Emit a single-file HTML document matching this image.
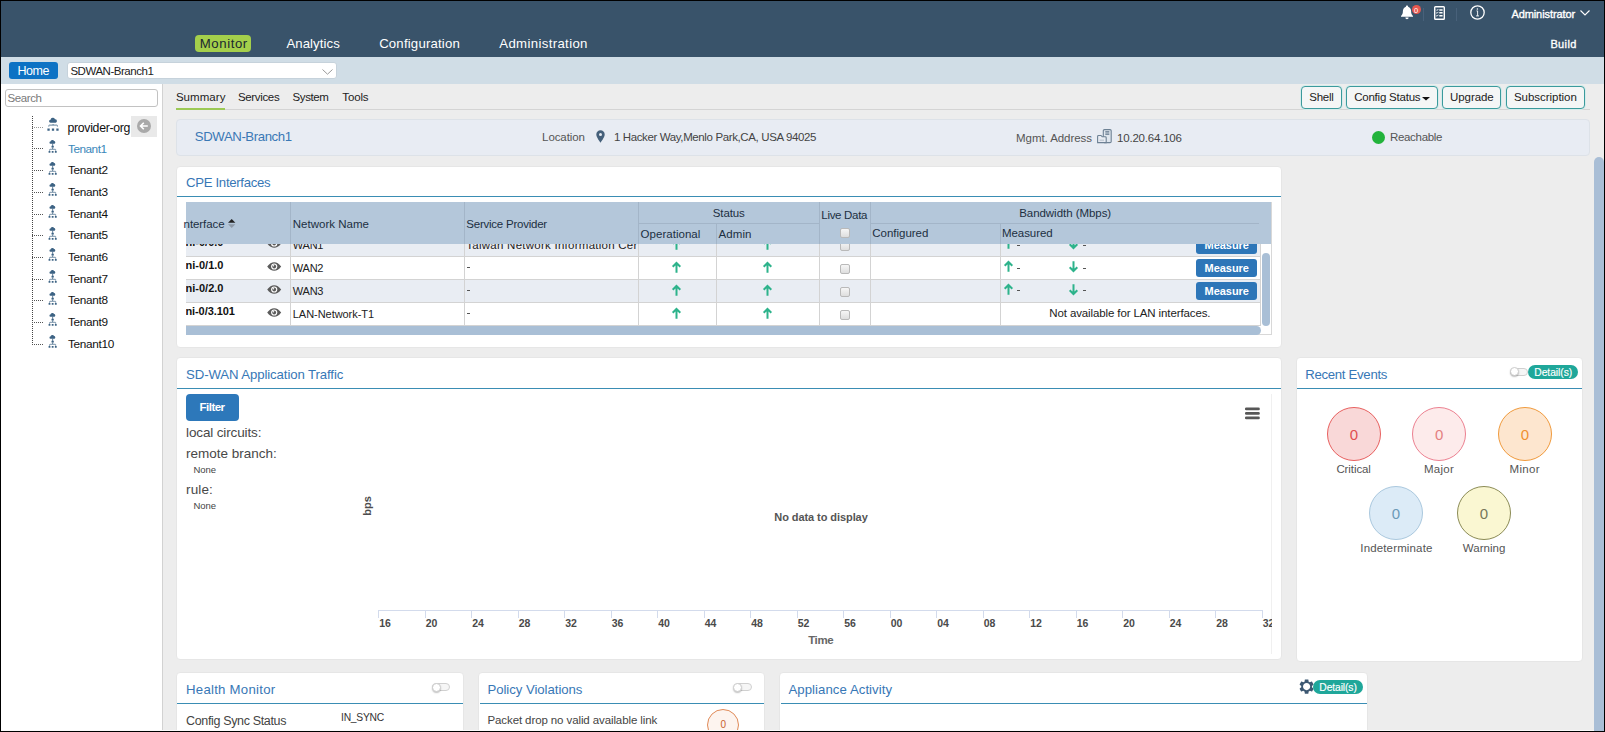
<!DOCTYPE html>
<html>
<head>
<meta charset="utf-8">
<title>SDWAN-Branch1</title>
<style>
*{box-sizing:border-box;margin:0;padding:0}
html,body{width:1605px;height:732px;overflow:hidden;background:#ededed;font-family:"Liberation Sans",sans-serif;font-size:12px;color:#222}
.a{position:absolute;white-space:nowrap}
.t{overflow:visible}
svg{position:absolute;overflow:visible}
.panel{background:#fff;border:1px solid #e6e6e6;border-radius:4px}
.pline{background:#3a8db4}
.btn{border:1px solid #3b9a9c;border-radius:4px;background:#f4f6f6;box-shadow:0 0 0 1px #d5ecec}
.circ{border-radius:50%;border-style:solid;border-width:1.5px}
.pill{background:#1fa79a;border-radius:8px}
.tog{border-radius:5px;background:#f6f6f6;border:1px solid #d0d0d0}
.knob{border-radius:50%;background:#fff;border:1px solid #cdcdcd;box-shadow:0 1px 1.5px rgba(0,0,0,.25)}

</style>
</head>
<body>
<div class="a" style="left:0px;top:0px;width:1605px;height:57px;background:#39536a"></div>
<div class="a" style="left:0px;top:57px;width:1605px;height:27px;background:#d0dde6"></div>
<div class="a" style="left:0px;top:84px;width:162px;height:648px;background:#fff"></div>
<div class="a" style="left:162px;top:84px;width:1px;height:648px;background:#d2d2d2"></div>
<div class="a" style="left:195px;top:35px;width:56px;height:17px;background:#a4cf4b;border-radius:4px"></div>
<div class="a t" style="left:199.74px;top:37.01px;font-size:13.2px;line-height:13.2px;color:#1a282f;letter-spacing:0.590px;">Monitor</div>
<div class="a t" style="left:286.44px;top:37.01px;font-size:13.2px;line-height:13.2px;color:#fff;letter-spacing:0.068px;">Analytics</div>
<div class="a t" style="left:379.14px;top:37.01px;font-size:13.2px;line-height:13.2px;color:#fff;letter-spacing:0.189px;">Configuration</div>
<div class="a t" style="left:499.24px;top:37.01px;font-size:13.2px;line-height:13.2px;color:#fff;letter-spacing:0.359px;">Administration</div>
<div class="a t" style="left:1511.41px;top:9.00px;font-size:11px;line-height:11px;color:#fff;letter-spacing:-0.086px;-webkit-text-stroke:0.35px #fff;">Administrator</div>
<div class="a t" style="left:1550.41px;top:39.01px;font-size:11px;line-height:11px;color:#fff;letter-spacing:0.375px;-webkit-text-stroke:0.35px #fff;">Build</div>
<svg style="left:1400px;top:4.5px" width="14" height="15" viewBox="0 0 14 15"><path d="M7 0.6c0.7 0 1.1 0.5 1.1 1.1 2 0.6 3 2.300 3 4.400 0 2.500 0.600 3.700 1.900 4.800v0.800h-12v-0.800c1.300-1.100 1.900-2.300 1.900-4.800 0-2.100 1-3.800 3-4.400 0-0.600 0.400-1.100 1.100-1.100z" fill="#fff"/><path d="M5.4 12.600h3.200c0 0.900-0.700 1.600-1.600 1.600s-1.600-0.700-1.600-1.600z" fill="#fff"/></svg>
<div class="a" style="left:1411.5px;top:5.4px;width:9px;height:9px;background:#e8584f;border-radius:50%"></div>
<div class="a t" style="left:1414.04px;top:7.00px;font-size:7.5px;line-height:7.5px;color:#fff;">0</div>
<div class="a" style="left:1423px;top:8px;width:1px;height:13px;background:#48617a"></div>
<svg style="left:1434px;top:5.500px" width="11" height="14" viewBox="0 0 11 14"><rect x="0.700" y="0.700" width="9.600" height="12.600" rx="0.800" fill="none" stroke="#fff" stroke-width="1.400"/><path d="M5.300 3.900h3.300M5.300 6.800h3.300M5.300 9.700h3.300" stroke="#fff" stroke-width="1.500"/><path d="M2.200 3.700l0.800 0.800 1.300-1.500M2.200 6.600l0.800 0.800 1.300-1.500M2.200 9.500l0.800 0.800 1.300-1.500" stroke="#fff" stroke-width="0.900" fill="none"/></svg>
<div class="a" style="left:1456px;top:8px;width:1px;height:13px;background:#48617a"></div>
<svg style="left:1470px;top:4.600px" width="15" height="15" viewBox="0 0 15 15"><circle cx="7.500" cy="7.500" r="6.700" fill="none" stroke="#fff" stroke-width="1.300"/><path d="M6.500 5.900h1.100v4.900M6.100 10.900h2.900" stroke="#fff" stroke-width="0.900" fill="none"/><circle cx="7.400" cy="3.900" r="0.750" fill="#fff"/></svg>
<svg style="left:1580px;top:9.500px" width="10" height="6" viewBox="0 0 10 6"><path d="M0.500 0.500l4.500 4.500 4.500-4.500" stroke="#fff" stroke-width="1.100" fill="none"/></svg>
<div class="a" style="left:9px;top:62px;width:49px;height:17px;background:#0d72c4;border-radius:3px"></div>
<div class="a t" style="left:17.56px;top:65.01px;font-size:12.5px;line-height:12.5px;color:#fff;letter-spacing:-0.490px;">Home</div>
<div class="a" style="left:67px;top:62px;width:270px;height:17px;background:#fff;border:1px solid #c6d2db;border-radius:3px"></div>
<div class="a t" style="left:70.40px;top:66.00px;font-size:11.5px;line-height:11.5px;color:#222;letter-spacing:-0.470px;">SDWAN-Branch1</div>
<svg style="left:321.500px;top:68.500px" width="11" height="6" viewBox="0 0 11 6"><path d="M0.500 0.500l5 4.700 5-4.700" stroke="#9a9a9a" stroke-width="1" fill="none"/></svg>
<div class="a" style="left:5px;top:89px;width:153px;height:18px;background:#fff;border:1px solid #c2c2c2;border-radius:3px"></div>
<div class="a t" style="left:7.60px;top:93.00px;font-size:11.5px;line-height:11.5px;color:#7a7a7a;letter-spacing:-0.427px;">Search</div>
<div class="a" style="left:32px;top:116px;width:1px;height:227.5px;background:repeating-linear-gradient(to bottom,#444 0,#444 1px,transparent 1px,transparent 2px)"></div>
<svg style="left:46.500px;top:118px" width="12" height="13" viewBox="0 0 12 13"><path d="M3.600 4.700a1.500 1.500 0 0 1-0.100-3 2.400 2.400 0 0 1 4.500-0.500 1.800 1.800 0 0 1 0.700 3.500z" fill="#3d6384"/><path d="M1.800 8.600v-0.900q0-0.600 0.600-0.600h7.400q0.600 0 0.600 0.600v0.900M6.100 7.100v-1" stroke="#3d6384" stroke-width="0.800" fill="none"/><path d="M0.400 10.500h2.300v2.200h-2.300zM4.850 10.500h2.300v2.200h-2.300zM9.300 10.500h2.300v2.200h-2.300z" fill="#3d6384"/></svg>
<div class="a" style="left:32px;top:127px;width:11px;height:1px;background:repeating-linear-gradient(to right,#999 0,#999 1px,transparent 1px,transparent 2px)"></div>
<div class="a t" style="left:67.47px;top:122.00px;font-size:12.3px;line-height:12.3px;color:#111;letter-spacing:-0.303px;">provider-org</div>
<div class="a" style="left:131px;top:116px;width:26px;height:21px;background:#e9e9e9"></div>
<svg style="left:137px;top:119px" width="14" height="14" viewBox="0 0 14 14"><circle cx="7" cy="7" r="7" fill="#a9a9a9"/><path d="M10.800 7h-7M6.800 3.700l-3.300 3.300 3.300 3.300" stroke="#fff" stroke-width="1.600" fill="none"/></svg>
<div class="a" style="left:32px;top:148px;width:11px;height:1px;background:repeating-linear-gradient(to right,#555 0,#555 1px,transparent 1px,transparent 2px)"></div>
<svg style="left:47.500px;top:140.0px" width="9.400" height="13" viewBox="0 0 9.400 13"><path d="M2.600 3.700a1.100 1.100 0 0 1-0.100-2.200 1.900 1.900 0 0 1 3.600-0.400 1.400 1.400 0 0 1 0.500 2.600z" fill="#3d6384"/><path d="M4.650 3.500v2.500M4.650 7.400v1.700" stroke="#3d6384" stroke-width="0.800"/><rect x="3.500" y="5.800" width="2.300" height="1.700" fill="#3d6384"/><path d="M1.600 10.800v-1q0-0.500 0.500-0.500h5.100q0.500 0 0.500 0.500v1" stroke="#3d6384" stroke-width="0.700" fill="none"/><path d="M0.600 11.100h1.800v1.700h-1.800zM3.750 11.100h1.800v1.700h-1.800zM6.900 11.100h1.800v1.700h-1.800z" fill="#3d6384"/></svg>
<div class="a t" style="left:67.99px;top:144.00px;font-size:11.8px;line-height:11.8px;color:#3a87ba;letter-spacing:-0.493px;">Tenant1</div>
<div class="a" style="left:32px;top:170px;width:11px;height:1px;background:repeating-linear-gradient(to right,#555 0,#555 1px,transparent 1px,transparent 2px)"></div>
<svg style="left:47.500px;top:161.7px" width="9.400" height="13" viewBox="0 0 9.400 13"><path d="M2.600 3.700a1.100 1.100 0 0 1-0.100-2.200 1.900 1.900 0 0 1 3.600-0.400 1.400 1.400 0 0 1 0.500 2.600z" fill="#3d6384"/><path d="M4.650 3.500v2.500M4.650 7.400v1.700" stroke="#3d6384" stroke-width="0.800"/><rect x="3.500" y="5.800" width="2.300" height="1.700" fill="#3d6384"/><path d="M1.600 10.800v-1q0-0.500 0.500-0.500h5.100q0.500 0 0.500 0.500v1" stroke="#3d6384" stroke-width="0.700" fill="none"/><path d="M0.600 11.100h1.800v1.700h-1.800zM3.750 11.100h1.800v1.700h-1.800zM6.900 11.100h1.800v1.700h-1.800z" fill="#3d6384"/></svg>
<div class="a t" style="left:67.99px;top:165.02px;font-size:11.8px;line-height:11.8px;color:#111;letter-spacing:-0.310px;">Tenant2</div>
<div class="a" style="left:32px;top:192px;width:11px;height:1px;background:repeating-linear-gradient(to right,#555 0,#555 1px,transparent 1px,transparent 2px)"></div>
<svg style="left:47.500px;top:183.3px" width="9.400" height="13" viewBox="0 0 9.400 13"><path d="M2.600 3.700a1.100 1.100 0 0 1-0.100-2.200 1.900 1.900 0 0 1 3.600-0.400 1.400 1.400 0 0 1 0.500 2.600z" fill="#3d6384"/><path d="M4.650 3.500v2.500M4.650 7.400v1.700" stroke="#3d6384" stroke-width="0.800"/><rect x="3.500" y="5.800" width="2.300" height="1.700" fill="#3d6384"/><path d="M1.600 10.800v-1q0-0.500 0.500-0.500h5.100q0.500 0 0.500 0.500v1" stroke="#3d6384" stroke-width="0.700" fill="none"/><path d="M0.600 11.100h1.800v1.700h-1.800zM3.750 11.100h1.800v1.700h-1.800zM6.900 11.100h1.800v1.700h-1.800z" fill="#3d6384"/></svg>
<div class="a t" style="left:67.99px;top:187.01px;font-size:11.8px;line-height:11.8px;color:#111;letter-spacing:-0.310px;">Tenant3</div>
<div class="a" style="left:32px;top:214px;width:11px;height:1px;background:repeating-linear-gradient(to right,#555 0,#555 1px,transparent 1px,transparent 2px)"></div>
<svg style="left:47.500px;top:205.0px" width="9.400" height="13" viewBox="0 0 9.400 13"><path d="M2.600 3.700a1.100 1.100 0 0 1-0.100-2.200 1.900 1.900 0 0 1 3.600-0.400 1.400 1.400 0 0 1 0.500 2.600z" fill="#3d6384"/><path d="M4.650 3.500v2.500M4.650 7.400v1.700" stroke="#3d6384" stroke-width="0.800"/><rect x="3.500" y="5.800" width="2.300" height="1.700" fill="#3d6384"/><path d="M1.600 10.800v-1q0-0.500 0.500-0.500h5.100q0.500 0 0.500 0.500v1" stroke="#3d6384" stroke-width="0.700" fill="none"/><path d="M0.600 11.100h1.800v1.700h-1.800zM3.750 11.100h1.800v1.700h-1.800zM6.900 11.100h1.800v1.700h-1.800z" fill="#3d6384"/></svg>
<div class="a t" style="left:67.99px;top:209.01px;font-size:11.8px;line-height:11.8px;color:#111;letter-spacing:-0.310px;">Tenant4</div>
<div class="a" style="left:32px;top:235px;width:11px;height:1px;background:repeating-linear-gradient(to right,#555 0,#555 1px,transparent 1px,transparent 2px)"></div>
<svg style="left:47.500px;top:226.7px" width="9.400" height="13" viewBox="0 0 9.400 13"><path d="M2.600 3.700a1.100 1.100 0 0 1-0.100-2.200 1.900 1.900 0 0 1 3.600-0.400 1.400 1.400 0 0 1 0.500 2.600z" fill="#3d6384"/><path d="M4.650 3.500v2.500M4.650 7.400v1.700" stroke="#3d6384" stroke-width="0.800"/><rect x="3.500" y="5.800" width="2.300" height="1.700" fill="#3d6384"/><path d="M1.600 10.800v-1q0-0.500 0.500-0.500h5.100q0.500 0 0.500 0.500v1" stroke="#3d6384" stroke-width="0.700" fill="none"/><path d="M0.600 11.100h1.800v1.700h-1.800zM3.750 11.100h1.800v1.700h-1.800zM6.900 11.100h1.800v1.700h-1.800z" fill="#3d6384"/></svg>
<div class="a t" style="left:67.99px;top:230.01px;font-size:11.8px;line-height:11.8px;color:#111;letter-spacing:-0.310px;">Tenant5</div>
<div class="a" style="left:32px;top:257px;width:11px;height:1px;background:repeating-linear-gradient(to right,#555 0,#555 1px,transparent 1px,transparent 2px)"></div>
<svg style="left:47.500px;top:248.3px" width="9.400" height="13" viewBox="0 0 9.400 13"><path d="M2.600 3.700a1.100 1.100 0 0 1-0.100-2.200 1.900 1.900 0 0 1 3.600-0.400 1.400 1.400 0 0 1 0.500 2.600z" fill="#3d6384"/><path d="M4.650 3.500v2.500M4.650 7.400v1.700" stroke="#3d6384" stroke-width="0.800"/><rect x="3.500" y="5.800" width="2.300" height="1.700" fill="#3d6384"/><path d="M1.600 10.800v-1q0-0.500 0.500-0.500h5.100q0.500 0 0.500 0.500v1" stroke="#3d6384" stroke-width="0.700" fill="none"/><path d="M0.600 11.100h1.800v1.700h-1.800zM3.750 11.100h1.800v1.700h-1.800zM6.900 11.100h1.800v1.700h-1.800z" fill="#3d6384"/></svg>
<div class="a t" style="left:67.99px;top:252.01px;font-size:11.8px;line-height:11.8px;color:#111;letter-spacing:-0.310px;">Tenant6</div>
<div class="a" style="left:32px;top:279px;width:11px;height:1px;background:repeating-linear-gradient(to right,#555 0,#555 1px,transparent 1px,transparent 2px)"></div>
<svg style="left:47.500px;top:270.0px" width="9.400" height="13" viewBox="0 0 9.400 13"><path d="M2.600 3.700a1.100 1.100 0 0 1-0.100-2.200 1.900 1.900 0 0 1 3.600-0.400 1.400 1.400 0 0 1 0.500 2.600z" fill="#3d6384"/><path d="M4.650 3.500v2.500M4.650 7.400v1.700" stroke="#3d6384" stroke-width="0.800"/><rect x="3.500" y="5.800" width="2.300" height="1.700" fill="#3d6384"/><path d="M1.600 10.800v-1q0-0.500 0.500-0.500h5.100q0.500 0 0.500 0.500v1" stroke="#3d6384" stroke-width="0.700" fill="none"/><path d="M0.600 11.100h1.800v1.700h-1.800zM3.750 11.100h1.800v1.700h-1.800zM6.900 11.100h1.800v1.700h-1.800z" fill="#3d6384"/></svg>
<div class="a t" style="left:67.99px;top:274.01px;font-size:11.8px;line-height:11.8px;color:#111;letter-spacing:-0.310px;">Tenant7</div>
<div class="a" style="left:32px;top:300px;width:11px;height:1px;background:repeating-linear-gradient(to right,#555 0,#555 1px,transparent 1px,transparent 2px)"></div>
<svg style="left:47.500px;top:291.7px" width="9.400" height="13" viewBox="0 0 9.400 13"><path d="M2.600 3.700a1.100 1.100 0 0 1-0.100-2.200 1.900 1.900 0 0 1 3.600-0.400 1.400 1.400 0 0 1 0.500 2.600z" fill="#3d6384"/><path d="M4.650 3.500v2.500M4.650 7.400v1.700" stroke="#3d6384" stroke-width="0.800"/><rect x="3.500" y="5.800" width="2.300" height="1.700" fill="#3d6384"/><path d="M1.600 10.800v-1q0-0.500 0.500-0.500h5.100q0.500 0 0.500 0.500v1" stroke="#3d6384" stroke-width="0.700" fill="none"/><path d="M0.600 11.100h1.800v1.700h-1.800zM3.750 11.100h1.800v1.700h-1.800zM6.900 11.100h1.800v1.700h-1.800z" fill="#3d6384"/></svg>
<div class="a t" style="left:67.99px;top:295.00px;font-size:11.8px;line-height:11.8px;color:#111;letter-spacing:-0.310px;">Tenant8</div>
<div class="a" style="left:32px;top:322px;width:11px;height:1px;background:repeating-linear-gradient(to right,#555 0,#555 1px,transparent 1px,transparent 2px)"></div>
<svg style="left:47.500px;top:313.4px" width="9.400" height="13" viewBox="0 0 9.400 13"><path d="M2.600 3.700a1.100 1.100 0 0 1-0.100-2.200 1.900 1.900 0 0 1 3.600-0.400 1.400 1.400 0 0 1 0.500 2.600z" fill="#3d6384"/><path d="M4.650 3.500v2.500M4.650 7.400v1.700" stroke="#3d6384" stroke-width="0.800"/><rect x="3.500" y="5.800" width="2.300" height="1.700" fill="#3d6384"/><path d="M1.600 10.800v-1q0-0.500 0.500-0.500h5.100q0.500 0 0.500 0.500v1" stroke="#3d6384" stroke-width="0.700" fill="none"/><path d="M0.600 11.100h1.800v1.700h-1.800zM3.750 11.100h1.800v1.700h-1.800zM6.900 11.100h1.800v1.700h-1.800z" fill="#3d6384"/></svg>
<div class="a t" style="left:67.99px;top:317.00px;font-size:11.8px;line-height:11.8px;color:#111;letter-spacing:-0.310px;">Tenant9</div>
<div class="a" style="left:32px;top:344px;width:11px;height:1px;background:repeating-linear-gradient(to right,#555 0,#555 1px,transparent 1px,transparent 2px)"></div>
<svg style="left:47.500px;top:335.0px" width="9.400" height="13" viewBox="0 0 9.400 13"><path d="M2.600 3.700a1.100 1.100 0 0 1-0.100-2.200 1.900 1.900 0 0 1 3.600-0.400 1.400 1.400 0 0 1 0.500 2.600z" fill="#3d6384"/><path d="M4.650 3.500v2.500M4.650 7.400v1.700" stroke="#3d6384" stroke-width="0.800"/><rect x="3.500" y="5.800" width="2.300" height="1.700" fill="#3d6384"/><path d="M1.600 10.800v-1q0-0.500 0.500-0.500h5.100q0.500 0 0.500 0.500v1" stroke="#3d6384" stroke-width="0.700" fill="none"/><path d="M0.600 11.100h1.800v1.700h-1.800zM3.750 11.100h1.800v1.700h-1.800zM6.900 11.100h1.800v1.700h-1.800z" fill="#3d6384"/></svg>
<div class="a t" style="left:67.99px;top:339.02px;font-size:11.8px;line-height:11.8px;color:#111;letter-spacing:-0.303px;">Tenant10</div>
<div class="a t" style="left:175.90px;top:92.00px;font-size:11.5px;line-height:11.5px;color:#222;letter-spacing:0.050px;">Summary</div>
<div class="a t" style="left:237.90px;top:92.00px;font-size:11.5px;line-height:11.5px;color:#222;letter-spacing:-0.329px;">Services</div>
<div class="a t" style="left:292.50px;top:92.00px;font-size:11.5px;line-height:11.5px;color:#222;letter-spacing:-0.388px;">System</div>
<div class="a t" style="left:342.30px;top:92.00px;font-size:11.5px;line-height:11.5px;color:#222;letter-spacing:-0.139px;">Tools</div>
<div class="a" style="left:176px;top:109px;width:1414px;height:1px;background:#d4d4d4"></div>
<div class="a" style="left:176px;top:108px;width:49px;height:2px;background:#9cc955"></div>
<div class="a btn" style="left:1301px;top:86px;width:41px;height:23px"></div>
<div class="a t" style="left:1309.30px;top:92.00px;font-size:11.5px;line-height:11.5px;color:#222;letter-spacing:-0.268px;">Shell</div>
<div class="a btn" style="left:1346px;top:86px;width:92px;height:23px"></div>
<div class="a t" style="left:1354.20px;top:92.00px;font-size:11.5px;line-height:11.5px;color:#222;letter-spacing:-0.220px;">Config Status</div>
<div class="a btn" style="left:1442px;top:86px;width:59px;height:23px"></div>
<div class="a t" style="left:1450.10px;top:92.00px;font-size:11.5px;line-height:11.5px;color:#222;letter-spacing:-0.087px;">Upgrade</div>
<div class="a btn" style="left:1506px;top:86px;width:79px;height:23px"></div>
<div class="a t" style="left:1513.90px;top:92.00px;font-size:11.5px;line-height:11.5px;color:#222;letter-spacing:-0.027px;">Subscription</div>
<svg style="left:1422.200px;top:96.900px" width="8" height="3.500" viewBox="0 0 8 3.500"><path d="M0 0h8l-4 3.500z" fill="#111"/></svg>
<div class="a" style="left:176px;top:119px;width:1414px;height:37px;background:#e8ecf3;border:1px solid #dde2e8;border-radius:4px"></div>
<div class="a t" style="left:194.84px;top:130.01px;font-size:13.2px;line-height:13.2px;color:#3a78b5;letter-spacing:-0.407px;">SDWAN-Branch1</div>
<div class="a t" style="left:542.10px;top:132.00px;font-size:11.5px;line-height:11.5px;color:#555;letter-spacing:-0.097px;">Location</div>
<svg style="left:595.500px;top:129.500px" width="9" height="13" viewBox="0 0 9 13"><path d="M4.500 0.300a4.200 4.200 0 0 1 4.200 4.200c0 2.900-4.200 8.200-4.200 8.200s-4.200-5.300-4.200-8.200a4.200 4.200 0 0 1 4.200-4.200z" fill="#45607a"/><circle cx="4.500" cy="4.400" r="1.500" fill="#e8ecf3"/></svg>
<div class="a t" style="left:613.90px;top:132.00px;font-size:11.5px;line-height:11.5px;color:#444;letter-spacing:-0.376px;">1 Hacker Way,Menlo Park,CA, USA 94025</div>
<div class="a t" style="left:1016.10px;top:133.00px;font-size:11.5px;line-height:11.5px;color:#555;letter-spacing:-0.075px;">Mgmt. Address</div>
<svg style="left:1097px;top:129px" width="15" height="14.500" viewBox="0 0 15 14.500"><rect x="6.300" y="0.600" width="7.900" height="13" rx="1.200" fill="#dfe6ee" stroke="#6d8194" stroke-width="1.100"/><path d="M8.300 2.900h4M8.300 5.100h4" stroke="#5c7186" stroke-width="1.200"/><path d="M0.600 13.600v-6.200q0-0.900 0.900-0.900h2.500l1.200 1.300h3.100q0.900 0 0.900 0.900v4.900z" fill="#e8ecf3" stroke="#6d8194" stroke-width="1.100"/><path d="M2.600 11.300h4.400" stroke="#c5ced8" stroke-width="1.600"/></svg>
<div class="a t" style="left:1117.10px;top:133.00px;font-size:11.5px;line-height:11.5px;color:#444;letter-spacing:-0.214px;">10.20.64.106</div>
<div class="a" style="left:1372px;top:131.2px;width:13px;height:13px;background:#22b33b;border-radius:50%"></div>
<div class="a t" style="left:1389.90px;top:132.01px;font-size:11.5px;line-height:11.5px;color:#555;letter-spacing:-0.297px;">Reachable</div>
<div class="a panel" style="left:176px;top:166px;width:1106px;height:182px"></div>
<div class="a t" style="left:186.04px;top:176.00px;font-size:13.2px;line-height:13.2px;color:#3777b6;letter-spacing:-0.320px;">CPE Interfaces</div>
<div class="a" style="left:177px;top:196px;width:1104px;height:1px;background:#3a8db4"></div>
<div class="a" style="left:186px;top:202px;width:1086px;height:133px;border:1px solid #d8d8d8;background:#fff"></div>
<div class="a" style="left:186px;top:243.6px;width:1074px;height:13.400000000000006px;background:#e9edf3;border-bottom:1px solid #d3d3d3"></div>
<div class="a" style="left:186px;top:257px;width:1074px;height:23px;background:#fff;border-bottom:1px solid #d3d3d3"></div>
<div class="a" style="left:186px;top:280px;width:1074px;height:23px;background:#e9edf3;border-bottom:1px solid #d3d3d3"></div>
<div class="a" style="left:186px;top:303px;width:1074px;height:23px;background:#fff;border-bottom:1px solid #d3d3d3"></div>
<div class="a" style="left:290px;top:243px;width:1px;height:83px;background:#d3d3d3"></div>
<div class="a" style="left:464px;top:243px;width:1px;height:83px;background:#d3d3d3"></div>
<div class="a" style="left:638px;top:243px;width:1px;height:83px;background:#d3d3d3"></div>
<div class="a" style="left:716px;top:243px;width:1px;height:83px;background:#d3d3d3"></div>
<div class="a" style="left:819px;top:243px;width:1px;height:83px;background:#d3d3d3"></div>
<div class="a" style="left:869.5px;top:243px;width:1px;height:83px;background:#d3d3d3"></div>
<div class="a" style="left:999.5px;top:243px;width:1px;height:83px;background:#d3d3d3"></div>
<div class="a" style="left:1259.5px;top:243px;width:1px;height:83px;background:#d3d3d3"></div>
<div class="a" style="left:186px;top:202px;width:1084.5px;height:41.6px;background:#b4c7da"></div>
<div class="a" style="left:290px;top:202px;width:1px;height:41.6px;background:#a3b5c8"></div>
<div class="a" style="left:464px;top:202px;width:1px;height:41.6px;background:#a3b5c8"></div>
<div class="a" style="left:638px;top:202px;width:1px;height:41.6px;background:#a3b5c8"></div>
<div class="a" style="left:819px;top:202px;width:1px;height:41.6px;background:#a3b5c8"></div>
<div class="a" style="left:869.5px;top:202px;width:1px;height:41.6px;background:#a3b5c8"></div>
<div class="a" style="left:716px;top:223.5px;width:1px;height:20px;background:#a3b5c8"></div>
<div class="a" style="left:999.5px;top:223.5px;width:1px;height:20px;background:#a3b5c8"></div>
<div class="a" style="left:638.5px;top:223px;width:180.5px;height:1px;background:#a3b5c8"></div>
<div class="a" style="left:870px;top:223px;width:389px;height:1px;background:#a3b5c8"></div>
<div class="a t" style="left:183.60px;top:219.00px;font-size:11.5px;line-height:11.5px;color:#1c2f42;letter-spacing:-0.080px;">nterface</div>
<svg style="left:228.200px;top:219px" width="7.400" height="9" viewBox="0 0 7.400 9"><path d="M0 3.800l3.700-3.800 3.700 3.800z" fill="#222"/><path d="M0 5.200l3.700 3.800 3.700-3.800z" fill="#8e9aa8"/></svg>
<div class="a t" style="left:292.80px;top:219.00px;font-size:11.5px;line-height:11.5px;color:#1c2f42;letter-spacing:0.013px;">Network Name</div>
<div class="a t" style="left:466.30px;top:219.00px;font-size:11.5px;line-height:11.5px;color:#1c2f42;letter-spacing:-0.231px;">Service Provider</div>
<div class="a t" style="left:712.80px;top:208.01px;font-size:11.5px;line-height:11.5px;color:#1c2f42;letter-spacing:-0.141px;">Status</div>
<div class="a t" style="left:640.60px;top:229.00px;font-size:11.5px;line-height:11.5px;color:#1c2f42;letter-spacing:0.024px;">Operational</div>
<div class="a t" style="left:718.50px;top:229.00px;font-size:11.5px;line-height:11.5px;color:#1c2f42;letter-spacing:0.099px;">Admin</div>
<div class="a t" style="left:821.30px;top:210.00px;font-size:11.5px;line-height:11.5px;color:#1c2f42;letter-spacing:-0.299px;">Live Data</div>
<div class="a t" style="left:872.30px;top:228.00px;font-size:11.5px;line-height:11.5px;color:#1c2f42;letter-spacing:-0.018px;">Configured</div>
<div class="a t" style="left:1002.00px;top:228.00px;font-size:11.5px;line-height:11.5px;color:#1c2f42;letter-spacing:-0.077px;">Measured</div>
<div class="a t" style="left:1019.20px;top:208.00px;font-size:11.5px;line-height:11.5px;color:#1c2f42;letter-spacing:-0.046px;">Bandwidth (Mbps)</div>
<div class="a" style="left:839.5px;top:227.5px;width:10px;height:10px;border:1px solid #b9b9b9;border-radius:2px;background:linear-gradient(#f6f6f6,#dedede)"></div>
<div class="a" style="left:186px;top:243.600px;width:1074px;height:82.400px;overflow:hidden">
<div class="a t" style="left:-6.68px;top:-6.60px;font-size:11px;line-height:11px;color:#111;font-weight:bold;letter-spacing:0.017px;">vni-0/0.0</div>
<svg style="left:80.800px;top:-4.6px" width="14.400" height="9" viewBox="0 0 14.400 9"><path d="M0.200 4.500q3.200-4.300 7-4.300t7 4.300q-3.200 4.300-7 4.300t-7-4.300z" fill="#5b5b5b"/><circle cx="7.200" cy="4.500" r="3.100" fill="#fff"/><circle cx="7.200" cy="4.500" r="1.900" fill="#5b5b5b"/><circle cx="6.500" cy="3.800" r="0.700" fill="#fff"/></svg>
<div class="a t" style="left:106.81px;top:-3.60px;font-size:11px;line-height:11px;color:#222;letter-spacing:-0.235px;">WAN1</div>
<div class="a t" style="left:280.30px;top:-3.60px;font-size:11.5px;line-height:11.5px;color:#222;letter-spacing:0.256px;width:171px;overflow:hidden;">Taiwan Network Information Center</div>
<svg style="left:486.4px;top:-4.4px" width="9" height="11" viewBox="0 0 9 11"><path d="M4.500 10.800v-9.500M0.700 4.800l3.800-3.800 3.800 3.800" stroke="#2db38b" stroke-width="2" fill="none"/></svg>
<svg style="left:577px;top:-4.4px" width="9" height="11" viewBox="0 0 9 11"><path d="M4.500 10.800v-9.500M0.700 4.800l3.800-3.800 3.800 3.800" stroke="#2db38b" stroke-width="2" fill="none"/></svg>
<div class="a" style="left:653.5px;top:-2.6px;width:10px;height:10px;border:1px solid #b9b9b9;border-radius:2px;background:linear-gradient(#f6f6f6,#dedede)"></div>
<svg style="left:817.8px;top:-5.6px" width="9" height="11" viewBox="0 0 9 11"><path d="M4.500 10.800v-9.500M0.700 4.800l3.800-3.800 3.800 3.800" stroke="#2db38b" stroke-width="2" fill="none"/></svg>
<div class="a" style="left:831px;top:1.000000000000017px;width:3px;height:1px;background:#555"></div>
<svg style="left:883.4000000000001px;top:-5.6px" width="9" height="11" viewBox="0 0 9 11"><path d="M4.500 0.200v9.500M0.700 6.200l3.800 3.800 3.800-3.800" stroke="#2db38b" stroke-width="2" fill="none"/></svg>
<div class="a" style="left:897px;top:1.000000000000017px;width:3px;height:1px;background:#555"></div>
<div class="a" style="left:1010.4000000000001px;top:-7.499999999999982px;width:61px;height:18px;background:#2d76b8;border-radius:3px"></div>
<div class="a t" style="left:1018.62px;top:-3.60px;font-size:11px;line-height:11px;color:#fff;font-weight:bold;letter-spacing:-0.062px;">Measure</div>
<div class="a t" style="left:-6.68px;top:16.42px;font-size:11px;line-height:11px;color:#111;font-weight:bold;letter-spacing:0.017px;">vni-0/1.0</div>
<svg style="left:80.800px;top:18.4px" width="14.400" height="9" viewBox="0 0 14.400 9"><path d="M0.200 4.500q3.200-4.300 7-4.300t7 4.300q-3.200 4.300-7 4.300t-7-4.300z" fill="#5b5b5b"/><circle cx="7.200" cy="4.500" r="3.100" fill="#fff"/><circle cx="7.200" cy="4.500" r="1.900" fill="#5b5b5b"/><circle cx="6.500" cy="3.800" r="0.700" fill="#fff"/></svg>
<div class="a t" style="left:106.81px;top:19.41px;font-size:11px;line-height:11px;color:#222;letter-spacing:-0.235px;">WAN2</div>
<div class="a" style="left:281.3px;top:23.700000000000017px;width:3px;height:1px;background:#555"></div>
<svg style="left:486.4px;top:18.6px" width="9" height="11" viewBox="0 0 9 11"><path d="M4.500 10.800v-9.500M0.700 4.800l3.800-3.800 3.800 3.800" stroke="#2db38b" stroke-width="2" fill="none"/></svg>
<svg style="left:577px;top:18.6px" width="9" height="11" viewBox="0 0 9 11"><path d="M4.500 10.800v-9.500M0.700 4.800l3.800-3.800 3.800 3.800" stroke="#2db38b" stroke-width="2" fill="none"/></svg>
<div class="a" style="left:653.5px;top:20.4px;width:10px;height:10px;border:1px solid #b9b9b9;border-radius:2px;background:linear-gradient(#f6f6f6,#dedede)"></div>
<svg style="left:817.8px;top:17.4px" width="9" height="11" viewBox="0 0 9 11"><path d="M4.500 10.800v-9.500M0.700 4.800l3.800-3.800 3.800 3.800" stroke="#2db38b" stroke-width="2" fill="none"/></svg>
<div class="a" style="left:831px;top:24.000000000000018px;width:3px;height:1px;background:#555"></div>
<svg style="left:883.4000000000001px;top:17.4px" width="9" height="11" viewBox="0 0 9 11"><path d="M4.500 0.200v9.500M0.700 6.200l3.800 3.800 3.800-3.800" stroke="#2db38b" stroke-width="2" fill="none"/></svg>
<div class="a" style="left:897px;top:24.000000000000018px;width:3px;height:1px;background:#555"></div>
<div class="a" style="left:1010.4000000000001px;top:15.500000000000018px;width:61px;height:18px;background:#2d76b8;border-radius:3px"></div>
<div class="a t" style="left:1018.62px;top:19.42px;font-size:11px;line-height:11px;color:#fff;font-weight:bold;letter-spacing:-0.062px;">Measure</div>
<div class="a t" style="left:-6.68px;top:39.41px;font-size:11px;line-height:11px;color:#111;font-weight:bold;letter-spacing:0.017px;">vni-0/2.0</div>
<svg style="left:80.800px;top:41.3px" width="14.400" height="9" viewBox="0 0 14.400 9"><path d="M0.200 4.500q3.200-4.300 7-4.300t7 4.300q-3.200 4.300-7 4.300t-7-4.300z" fill="#5b5b5b"/><circle cx="7.200" cy="4.500" r="3.100" fill="#fff"/><circle cx="7.200" cy="4.500" r="1.900" fill="#5b5b5b"/><circle cx="6.500" cy="3.800" r="0.700" fill="#fff"/></svg>
<div class="a t" style="left:106.81px;top:42.41px;font-size:11px;line-height:11px;color:#222;letter-spacing:-0.235px;">WAN3</div>
<div class="a" style="left:281.3px;top:46.599999999999994px;width:3px;height:1px;background:#555"></div>
<svg style="left:486.4px;top:41.5px" width="9" height="11" viewBox="0 0 9 11"><path d="M4.500 10.800v-9.500M0.700 4.800l3.800-3.800 3.800 3.800" stroke="#2db38b" stroke-width="2" fill="none"/></svg>
<svg style="left:577px;top:41.5px" width="9" height="11" viewBox="0 0 9 11"><path d="M4.500 10.800v-9.500M0.700 4.800l3.800-3.800 3.800 3.800" stroke="#2db38b" stroke-width="2" fill="none"/></svg>
<div class="a" style="left:653.5px;top:43.3px;width:10px;height:10px;border:1px solid #b9b9b9;border-radius:2px;background:linear-gradient(#f6f6f6,#dedede)"></div>
<svg style="left:817.8px;top:40.3px" width="9" height="11" viewBox="0 0 9 11"><path d="M4.500 10.800v-9.500M0.700 4.800l3.800-3.800 3.800 3.800" stroke="#2db38b" stroke-width="2" fill="none"/></svg>
<div class="a" style="left:831px;top:46.89999999999999px;width:3px;height:1px;background:#555"></div>
<svg style="left:883.4000000000001px;top:40.3px" width="9" height="11" viewBox="0 0 9 11"><path d="M4.500 0.200v9.500M0.700 6.200l3.800 3.800 3.800-3.800" stroke="#2db38b" stroke-width="2" fill="none"/></svg>
<div class="a" style="left:897px;top:46.89999999999999px;width:3px;height:1px;background:#555"></div>
<div class="a" style="left:1010.4000000000001px;top:38.39999999999999px;width:61px;height:18px;background:#2d76b8;border-radius:3px"></div>
<div class="a t" style="left:1018.62px;top:42.41px;font-size:11px;line-height:11px;color:#fff;font-weight:bold;letter-spacing:-0.062px;">Measure</div>
<div class="a t" style="left:-6.68px;top:62.41px;font-size:11px;line-height:11px;color:#111;font-weight:bold;letter-spacing:-0.070px;">vni-0/3.101</div>
<svg style="left:80.800px;top:64.5px" width="14.400" height="9" viewBox="0 0 14.400 9"><path d="M0.200 4.500q3.200-4.300 7-4.300t7 4.300q-3.200 4.300-7 4.300t-7-4.300z" fill="#5b5b5b"/><circle cx="7.200" cy="4.500" r="3.100" fill="#fff"/><circle cx="7.200" cy="4.500" r="1.900" fill="#5b5b5b"/><circle cx="6.500" cy="3.800" r="0.700" fill="#fff"/></svg>
<div class="a t" style="left:106.81px;top:65.42px;font-size:11px;line-height:11px;color:#222;letter-spacing:-0.049px;">LAN-Network-T1</div>
<div class="a" style="left:281.3px;top:69.79999999999998px;width:3px;height:1px;background:#555"></div>
<svg style="left:486.4px;top:64.7px" width="9" height="11" viewBox="0 0 9 11"><path d="M4.500 10.800v-9.500M0.700 4.800l3.800-3.800 3.800 3.800" stroke="#2db38b" stroke-width="2" fill="none"/></svg>
<svg style="left:577px;top:64.7px" width="9" height="11" viewBox="0 0 9 11"><path d="M4.500 10.800v-9.500M0.700 4.800l3.800-3.800 3.800 3.800" stroke="#2db38b" stroke-width="2" fill="none"/></svg>
<div class="a" style="left:653.5px;top:66.5px;width:10px;height:10px;border:1px solid #b9b9b9;border-radius:2px;background:linear-gradient(#f6f6f6,#dedede)"></div>
<div class="a t" style="left:863.30px;top:64.41px;font-size:11.5px;line-height:11.5px;color:#222;letter-spacing:-0.116px;">Not available for LAN interfaces.</div>
</div>
<div class="a" style="left:186px;top:326px;width:1075px;height:8.5px;background:#a9bfd6;border-radius:0 4.500px 4.500px 0"></div>
<div class="a" style="left:1261.5px;top:253px;width:8.5px;height:72.8px;background:#a9bfd6;border-radius:4.500px"></div>
<div class="a panel" style="left:176px;top:357px;width:1106px;height:303px"></div>
<div class="a t" style="left:186.04px;top:368.01px;font-size:13.2px;line-height:13.2px;color:#3777b6;letter-spacing:-0.098px;">SD-WAN Application Traffic</div>
<div class="a" style="left:177px;top:388px;width:1104px;height:1px;background:#3a8db4"></div>
<div class="a" style="left:186px;top:394px;width:52.6px;height:26.7px;background:#2d78ba;border-radius:4px"></div>
<div class="a t" style="left:199.60px;top:402.00px;font-size:11.5px;line-height:11.5px;color:#fff;font-weight:bold;letter-spacing:-0.544px;">Filter</div>
<div class="a t" style="left:186.03px;top:426.01px;font-size:13.5px;line-height:13.5px;color:#484848;letter-spacing:-0.131px;">local circuits:</div>
<div class="a t" style="left:186.03px;top:447.02px;font-size:13.5px;line-height:13.5px;color:#484848;">remote branch:</div>
<div class="a t" style="left:193.57px;top:465.01px;font-size:9.5px;line-height:9.5px;color:#444;letter-spacing:-0.085px;">None</div>
<div class="a t" style="left:186.03px;top:483.01px;font-size:13.5px;line-height:13.5px;color:#484848;letter-spacing:0.120px;">rule:</div>
<div class="a t" style="left:193.57px;top:501.00px;font-size:9.5px;line-height:9.5px;color:#444;letter-spacing:-0.085px;">None</div>
<div class="a" style="left:1271px;top:394px;width:1px;height:260px;background:#f0f0f0"></div>
<div class="a" style="left:358px;top:497px;width:18px;height:18px"><div class="a" style="left:9px;top:9px;transform:translate(-50%,-50%) rotate(-90deg);font-size:11px;font-weight:bold;color:#4d4d4d;line-height:11px">bps</div></div>
<div class="a t" style="left:774.32px;top:512.01px;font-size:11px;line-height:11px;color:#555;font-weight:bold;letter-spacing:-0.075px;">No data to display</div>
<div class="a t" style="left:808.20px;top:635.00px;font-size:11.5px;line-height:11.5px;color:#666;font-weight:bold;letter-spacing:-0.412px;">Time</div>
<div class="a" style="left:370px;top:600px;width:901.500px;height:40px;overflow:hidden">
<div class="a" style="left:8.9px;top:9.5px;width:884px;height:1px;background:#d3dbec"></div>
<div class="a" style="left:8.4px;top:9.5px;width:1px;height:8.5px;background:#d3dbec"></div>
<div class="a t" style="left:9.33px;top:18.01px;font-size:10.5px;line-height:10.5px;color:#4a4a4a;font-weight:bold;letter-spacing:-0.152px;">16</div>
<div class="a" style="left:54.9px;top:9.5px;width:1px;height:8.5px;background:#d3dbec"></div>
<div class="a t" style="left:55.83px;top:18.01px;font-size:10.5px;line-height:10.5px;color:#4a4a4a;font-weight:bold;letter-spacing:-0.153px;">20</div>
<div class="a" style="left:101.4px;top:9.5px;width:1px;height:8.5px;background:#d3dbec"></div>
<div class="a t" style="left:102.33px;top:18.01px;font-size:10.5px;line-height:10.5px;color:#4a4a4a;font-weight:bold;letter-spacing:-0.153px;">24</div>
<div class="a" style="left:147.9px;top:9.5px;width:1px;height:8.5px;background:#d3dbec"></div>
<div class="a t" style="left:148.83px;top:18.01px;font-size:10.5px;line-height:10.5px;color:#4a4a4a;font-weight:bold;letter-spacing:-0.153px;">28</div>
<div class="a" style="left:194.4px;top:9.5px;width:1px;height:8.5px;background:#d3dbec"></div>
<div class="a t" style="left:195.33px;top:18.01px;font-size:10.5px;line-height:10.5px;color:#4a4a4a;font-weight:bold;letter-spacing:-0.153px;">32</div>
<div class="a" style="left:240.9px;top:9.5px;width:1px;height:8.5px;background:#d3dbec"></div>
<div class="a t" style="left:241.83px;top:18.01px;font-size:10.5px;line-height:10.5px;color:#4a4a4a;font-weight:bold;letter-spacing:-0.153px;">36</div>
<div class="a" style="left:287.4px;top:9.5px;width:1px;height:8.5px;background:#d3dbec"></div>
<div class="a t" style="left:288.33px;top:18.01px;font-size:10.5px;line-height:10.5px;color:#4a4a4a;font-weight:bold;letter-spacing:-0.152px;">40</div>
<div class="a" style="left:333.9px;top:9.5px;width:1px;height:8.5px;background:#d3dbec"></div>
<div class="a t" style="left:334.83px;top:18.01px;font-size:10.5px;line-height:10.5px;color:#4a4a4a;font-weight:bold;letter-spacing:-0.152px;">44</div>
<div class="a" style="left:380.4px;top:9.5px;width:1px;height:8.5px;background:#d3dbec"></div>
<div class="a t" style="left:381.33px;top:18.01px;font-size:10.5px;line-height:10.5px;color:#4a4a4a;font-weight:bold;letter-spacing:-0.152px;">48</div>
<div class="a" style="left:426.9px;top:9.5px;width:1px;height:8.5px;background:#d3dbec"></div>
<div class="a t" style="left:427.83px;top:18.01px;font-size:10.5px;line-height:10.5px;color:#4a4a4a;font-weight:bold;letter-spacing:-0.152px;">52</div>
<div class="a" style="left:473.4px;top:9.5px;width:1px;height:8.5px;background:#d3dbec"></div>
<div class="a t" style="left:474.33px;top:18.01px;font-size:10.5px;line-height:10.5px;color:#4a4a4a;font-weight:bold;letter-spacing:-0.152px;">56</div>
<div class="a" style="left:519.9px;top:9.5px;width:1px;height:8.5px;background:#d3dbec"></div>
<div class="a t" style="left:520.83px;top:18.01px;font-size:10.5px;line-height:10.5px;color:#4a4a4a;font-weight:bold;letter-spacing:-0.152px;">00</div>
<div class="a" style="left:566.4px;top:9.5px;width:1px;height:8.5px;background:#d3dbec"></div>
<div class="a t" style="left:567.33px;top:18.01px;font-size:10.5px;line-height:10.5px;color:#4a4a4a;font-weight:bold;letter-spacing:-0.152px;">04</div>
<div class="a" style="left:612.9px;top:9.5px;width:1px;height:8.5px;background:#d3dbec"></div>
<div class="a t" style="left:613.83px;top:18.01px;font-size:10.5px;line-height:10.5px;color:#4a4a4a;font-weight:bold;letter-spacing:-0.152px;">08</div>
<div class="a" style="left:659.4px;top:9.5px;width:1px;height:8.5px;background:#d3dbec"></div>
<div class="a t" style="left:660.33px;top:18.01px;font-size:10.5px;line-height:10.5px;color:#4a4a4a;font-weight:bold;letter-spacing:-0.152px;">12</div>
<div class="a" style="left:705.9px;top:9.5px;width:1px;height:8.5px;background:#d3dbec"></div>
<div class="a t" style="left:706.83px;top:18.01px;font-size:10.5px;line-height:10.5px;color:#4a4a4a;font-weight:bold;letter-spacing:-0.152px;">16</div>
<div class="a" style="left:752.4px;top:9.5px;width:1px;height:8.5px;background:#d3dbec"></div>
<div class="a t" style="left:753.33px;top:18.01px;font-size:10.5px;line-height:10.5px;color:#4a4a4a;font-weight:bold;letter-spacing:-0.152px;">20</div>
<div class="a" style="left:798.9px;top:9.5px;width:1px;height:8.5px;background:#d3dbec"></div>
<div class="a t" style="left:799.83px;top:18.01px;font-size:10.5px;line-height:10.5px;color:#4a4a4a;font-weight:bold;letter-spacing:-0.152px;">24</div>
<div class="a" style="left:845.4px;top:9.5px;width:1px;height:8.5px;background:#d3dbec"></div>
<div class="a t" style="left:846.33px;top:18.01px;font-size:10.5px;line-height:10.5px;color:#4a4a4a;font-weight:bold;letter-spacing:-0.152px;">28</div>
<div class="a" style="left:891.9px;top:9.5px;width:1px;height:8.5px;background:#d3dbec"></div>
<div class="a t" style="left:892.83px;top:18.01px;font-size:10.5px;line-height:10.5px;color:#4a4a4a;font-weight:bold;letter-spacing:-0.152px;">32</div>
</div>
<svg style="left:1244px;top:405px" width="17" height="16" viewBox="0 0 17 16"><path d="M2.300 3.900h12.200M2.300 8.400h12.200M2.300 12.900h12.200" stroke="#575757" stroke-width="2.700" stroke-linecap="round"/></svg>
<div class="a panel" style="left:1296px;top:357px;width:287px;height:305px"></div>
<div class="a t" style="left:1305.24px;top:368.00px;font-size:13.2px;line-height:13.2px;color:#3777b6;letter-spacing:-0.303px;">Recent Events</div>
<div class="a" style="left:1297px;top:388px;width:284.5px;height:1px;background:#3a8db4"></div>
<div class="a tog" style="left:1510px;top:367.500px;width:18px;height:8px"></div><div class="a knob" style="left:1509.500px;top:367px;width:9px;height:9px"></div>
<div class="a pill" style="left:1528px;top:365px;width:50px;height:14px"></div>
<div class="a t" style="left:1534.34px;top:368.00px;font-size:10.3px;line-height:10.3px;color:#fff;letter-spacing:-0.065px;-webkit-text-stroke:0.15px #fff;">Detail(s)</div>
<div class="a circ" style="left:1327.0px;top:406.8px;width:54px;height:54px;background:#f9d8d8;border-color:#e8605f"></div>
<div class="a t" style="left:1349.67px;top:427.00px;font-size:15px;line-height:15px;color:#e04f4f;">0</div>
<div class="a t" style="left:1336.40px;top:464.00px;font-size:11.5px;line-height:11.5px;color:#555;letter-spacing:-0.091px;">Critical</div>
<div class="a circ" style="left:1412.2px;top:406.8px;width:54px;height:54px;background:#fdebeb;border-color:#ec8090"></div>
<div class="a t" style="left:1434.88px;top:427.00px;font-size:15px;line-height:15px;color:#e47f80;">0</div>
<div class="a t" style="left:1424.00px;top:464.00px;font-size:11.5px;line-height:11.5px;color:#555;letter-spacing:0.260px;">Major</div>
<div class="a circ" style="left:1498.0px;top:406.8px;width:54px;height:54px;background:#fde6cf;border-color:#f09a3c"></div>
<div class="a t" style="left:1520.67px;top:427.00px;font-size:15px;line-height:15px;color:#f0902e;">0</div>
<div class="a t" style="left:1509.50px;top:464.00px;font-size:11.5px;line-height:11.5px;color:#555;letter-spacing:0.335px;">Minor</div>
<div class="a circ" style="left:1369.0px;top:485.9px;width:54px;height:54px;background:#dcebf7;border-color:#aac8de"></div>
<div class="a t" style="left:1391.67px;top:506.01px;font-size:15px;line-height:15px;color:#6b9ab8;">0</div>
<div class="a t" style="left:1360.30px;top:543.00px;font-size:11.5px;line-height:11.5px;color:#555;letter-spacing:0.148px;">Indeterminate</div>
<div class="a circ" style="left:1457.0px;top:485.9px;width:54px;height:54px;background:#faf7d2;border-color:#8b8b55"></div>
<div class="a t" style="left:1479.67px;top:506.01px;font-size:15px;line-height:15px;color:#77775a;">0</div>
<div class="a t" style="left:1462.80px;top:543.00px;font-size:11.5px;line-height:11.5px;color:#555;letter-spacing:0.033px;">Warning</div>
<div class="a panel" style="left:176px;top:672px;width:288px;height:70px"></div>
<div class="a t" style="left:186.04px;top:683.01px;font-size:13.2px;line-height:13.2px;color:#3777b6;letter-spacing:0.258px;">Health Monitor</div>
<div class="a" style="left:177px;top:703px;width:286px;height:1px;background:#3a8db4"></div>
<div class="a tog" style="left:432px;top:683px;width:18px;height:8px"></div><div class="a knob" style="left:431.500px;top:682.500px;width:9px;height:9px"></div>
<div class="a t" style="left:186.06px;top:715.00px;font-size:12.5px;line-height:12.5px;color:#444;letter-spacing:-0.349px;">Config Sync Status</div>
<div class="a t" style="left:341.04px;top:713.00px;font-size:10.3px;line-height:10.3px;color:#333;letter-spacing:-0.237px;">IN_SYNC</div>
<div class="a panel" style="left:478px;top:672px;width:287px;height:70px"></div>
<div class="a t" style="left:487.44px;top:683.01px;font-size:13.2px;line-height:13.2px;color:#3777b6;letter-spacing:-0.048px;">Policy Violations</div>
<div class="a" style="left:479.5px;top:703px;width:284.5px;height:1px;background:#3a8db4"></div>
<div class="a tog" style="left:733.500px;top:683px;width:18px;height:8px"></div><div class="a knob" style="left:733px;top:682.500px;width:9px;height:9px"></div>
<div class="a t" style="left:487.50px;top:715.00px;font-size:11.5px;line-height:11.5px;color:#444;letter-spacing:-0.104px;">Packet drop no valid available link</div>
<div class="a circ" style="left:707px;top:709.200px;width:32.200px;height:32.200px;background:#fdf4ef;border-color:#e08a58"></div>
<div class="a t" style="left:720.55px;top:720.01px;font-size:10px;line-height:10px;color:#c8622c;">0</div>
<div class="a panel" style="left:779px;top:672px;width:589px;height:70px"></div>
<div class="a t" style="left:788.44px;top:683.01px;font-size:13.2px;line-height:13.2px;color:#3777b6;letter-spacing:0.059px;">Appliance Activity</div>
<div class="a" style="left:780.5px;top:703px;width:586px;height:1px;background:#3a8db4"></div>
<svg style="left:1297.600px;top:677.700px" width="17.200" height="17.200" viewBox="0 0 24 24"><path d="M19.430 12.980c0.040-0.320 0.070-0.640 0.070-0.980s-0.030-0.660-0.070-0.980l2.110-1.650c0.190-0.150 0.240-0.420 0.120-0.640l-2-3.460c-0.120-0.220-0.390-0.300-0.610-0.220l-2.490 1c-0.520-0.400-1.080-0.730-1.690-0.980l-0.380-2.650c-0.030-0.240-0.240-0.420-0.490-0.420h-4c-0.250 0-0.460 0.180-0.490 0.420l-0.380 2.650c-0.610 0.250-1.170 0.590-1.690 0.980l-2.490-1c-0.230-0.090-0.490 0-0.610 0.220l-2 3.460c-0.130 0.220-0.070 0.490 0.120 0.640l2.110 1.650c-0.040 0.320-0.070 0.650-0.070 0.980s0.030 0.660 0.070 0.980l-2.110 1.650c-0.190 0.150-0.240 0.420-0.120 0.640l2 3.460c0.120 0.220 0.390 0.300 0.610 0.220l2.490-1c0.520 0.400 1.080 0.730 1.690 0.980l0.380 2.650c0.030 0.240 0.240 0.420 0.490 0.420h4c0.250 0 0.460-0.180 0.490-0.420l0.380-2.650c0.610-0.250 1.170-0.590 1.690-0.980l2.490 1c0.230 0.090 0.490 0 0.610-0.220l2-3.460c0.120-0.220 0.070-0.490-0.120-0.640l-2.110-1.650zM12 17c-2.760 0-5-2.240-5-5s2.240-5 5-5 5 2.240 5 5-2.240 5-5 5z" fill="#3d5872"/></svg>
<div class="a pill" style="left:1313px;top:680.200px;width:50px;height:13.500px"></div>
<div class="a t" style="left:1319.34px;top:683.00px;font-size:10.3px;line-height:10.3px;color:#fff;letter-spacing:-0.103px;-webkit-text-stroke:0.15px #fff;">Detail(s)</div>
<div class="a" style="left:1594px;top:157px;width:10px;height:575px;background:#a9bed6;border-radius:5px 5px 0 0"></div>
<div class="a" style="left:1px;top:730px;width:1593px;height:1px;background:#fafafa"></div>
<div class="a" style="left:0;top:0;width:1605px;height:732px;border:1px solid #000"></div>
</body>
</html>
